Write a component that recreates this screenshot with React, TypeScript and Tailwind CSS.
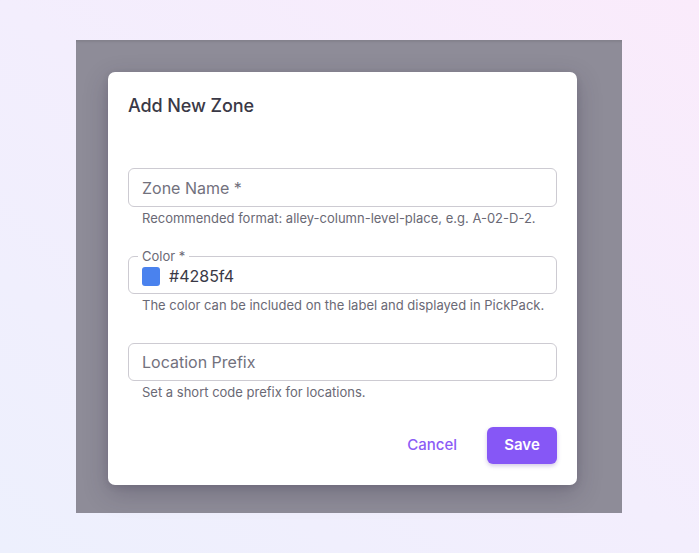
import React from "react";

export default function App() {
  return (
    <div
      className="w-[699px] h-[553px] bg-gradient-to-tr from-[#edf0fd] via-[#f3eefd] to-[#faebfb] pt-[40px] pl-[76px]"
      style={{ fontFamily: "Inter, 'Noto Sans', sans-serif" }}
    >
      <div className="w-[546px] h-[473px] bg-[#8e8c98] shadow-[inset_0_3px_2px_-1px_rgba(0,0,0,0.08)] pt-[32px] pl-[32px]">
        <div className="w-[469px] h-[413px] bg-white rounded-[7px] shadow-[0_8px_24px_rgba(40,30,60,0.25),0_2px_6px_rgba(40,30,60,0.12)] px-5 pt-[24px] flex flex-col">
          <h2 className="text-[18px] leading-[20px] font-medium text-[#3a3946] tracking-[-0.1px]">
            Add New Zone
          </h2>

          <div className="mt-[52px] h-[39px] rounded-[6px] border border-[#cdcbd2] flex items-center px-[13px]">
            <span className="text-[16px] text-[#72717d]">Zone Name *</span>
          </div>
          <p className="mt-[3px] pl-[14px] text-[13px] leading-[16px] text-[#6a6975]">
            Recommended format: alley-column-level-place, e.g. A-02-D-2.
          </p>

          <div className="relative mt-[30px] h-[38px] rounded-[6px] border border-[#cdcbd2] flex items-center px-[13px] gap-[9px]">
            <span className="absolute left-[9px] -top-[9px] bg-white px-[4px] text-[13px] leading-[16px] text-[#6a6975]">
              Color *
            </span>
            <span className="w-[18px] h-[19px] rounded-[3px] bg-[#4a82ee] mt-[2px]"></span>
            <span className="text-[16px] text-[#3a3946] mt-[1px]">#4285f4</span>
          </div>
          <p className="mt-[3px] pl-[14px] text-[13px] leading-[16px] text-[#6a6975]">
            The color can be included on the label and displayed in PickPack.
          </p>

          <div className="mt-[30px] h-[38px] rounded-[6px] border border-[#cdcbd2] flex items-center px-[13px]">
            <span className="text-[16px] text-[#72717d]">Location Prefix</span>
          </div>
          <p className="mt-[3px] pl-[14px] text-[13px] leading-[16px] text-[#6a6975]">
            Set a short code prefix for locations.
          </p>

          <div className="mt-[27px] flex justify-end items-center gap-[30px]">
            <button className="text-[15px] font-medium text-[#8b5cf6]">Cancel</button>
            <button className="w-[70px] h-[37px] rounded-[6px] bg-[#8657f6] text-white text-[15px] font-semibold shadow-[0_2px_4px_rgba(80,40,160,0.25)]">
              Save
            </button>
          </div>
        </div>
      </div>
    </div>
  );
}
